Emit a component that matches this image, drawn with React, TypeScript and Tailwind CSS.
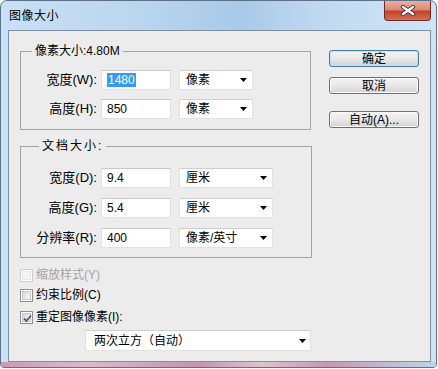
import React from "react";

const font = "font-['Liberation_Sans','Noto_Sans_CJK_SC',sans-serif]";

function Arrow() {
  return (
    <svg width="7" height="4" viewBox="0 0 7 4" className="shrink-0">
      <path d="M0 0 H7 L3.5 4 Z" fill="#000" />
    </svg>
  );
}

function Field({ children }: { children: React.ReactNode }) {
  return (
    <div className="w-[70px] h-[20px] bg-white border border-[#e2e2e2] border-t-[#c8c8c8] pl-[5px] flex items-center leading-[14px]">
      {children}
    </div>
  );
}

function Select({ label, width }: { label: string; width: string }) {
  return (
    <div
      className={`${width} h-[20px] ml-[8px] bg-white border border-[#e2e2e2] border-t-[#cfcfcf] pl-[6px] pr-[5px] flex items-center justify-between leading-[14px]`}
    >
      <span>{label}</span>
      <Arrow />
    </div>
  );
}

function Row({
  label,
  value,
  unit,
  width,
  selected,
}: {
  label: string;
  value: string;
  unit: string;
  width: string;
  selected?: boolean;
}) {
  return (
    <div className="flex items-center h-[20px]">
      <span className="w-[80px] pr-[4px] text-right text-[13px] leading-[14px]">{label}</span>
      <Field>
        {selected ? <span className="bg-[#3399ff] text-white px-[1px]">{value}</span> : <span>{value}</span>}
      </Field>
      <Select label={unit} width={width} />
    </div>
  );
}

function Checkbox({ checked, disabled }: { checked?: boolean; disabled?: boolean }) {
  return (
    <div
      className={`w-[13px] h-[13px] border ${disabled ? "border-[#cdcdcd]" : "border-[#8e8f8f]"} bg-white p-[1px] shrink-0`}
    >
      <div
        className={`w-full h-full border ${
          disabled ? "border-[#e6e6e6] bg-[#f4f4f4]" : "border-[#c6c6c6] bg-gradient-to-br from-[#d6d6d6] to-[#fafafa]"
        } relative`}
      >
        {checked && (
          <svg width="11" height="11" viewBox="0 0 11 11" className="absolute -left-[1px] -top-[1px]">
            <path d="M2 5.5 L4.5 8 L9 2.5" stroke="#4a5b80" strokeWidth="1.8" fill="none" />
          </svg>
        )}
      </div>
    </div>
  );
}

function Button({ label, primary }: { label: string; primary?: boolean }) {
  return (
    <div
      className={`w-[90px] h-[17px] rounded-[3px] border flex items-center justify-center leading-[14px] bg-gradient-to-b from-[#f4f4f4] via-[#e8e8e8] to-[#d2d2d2] ${
        primary ? "border-[#3c7fb1] shadow-[inset_0_0_0_1px_#bfe4f8]" : "border-[#707070] shadow-[inset_0_0_0_1px_#fbfbfb]"
      }`}
    >
      {label}
    </div>
  );
}

export default function App() {
  return (
    <div className={`w-[438px] h-[369px] bg-white text-[12px] text-black ${font}`}>
      <div className="relative w-[437px] h-[368px] rounded-t-[7px] rounded-b-[4px] border border-[#5c7186] bg-[linear-gradient(90deg,#c9e0f6_0%,#bcd6ef_30%,#a9c9e9_55%,#c2daf1_75%,#cfe3f6_100%)] flex flex-col overflow-hidden">
        {/* title bar */}
        <div className="h-[29px] pl-[8px] flex items-center text-[12px] tracking-[0.5px] leading-[14px]">图像大小</div>

        <div className="absolute right-[5px] top-0 w-[47px] h-[20px] rounded-b-[4px] border border-t-0 border-[#6f2b22] bg-[linear-gradient(180deg,#eab0a2_0%,#dc8a76_45%,#c4422b_55%,#d2705a_100%)] flex items-center justify-center">
          <svg width="16" height="11" viewBox="0 0 16 11">
            <path d="M3 2 L13 9 M13 2 L3 9" stroke="#4a3b3b" strokeWidth="4.2" strokeLinecap="round" />
            <path d="M3 2 L13 9 M13 2 L3 9" stroke="#ffffff" strokeWidth="2.2" strokeLinecap="round" />
          </svg>
        </div>

        {/* client area */}
        <div className="ml-[7px] w-[423px] h-[332px] border border-[#7d91a6] bg-[#ececec] flex">
          <div className="pl-[11px] flex flex-col">
            <fieldset className="mt-[13px] w-[291px] border border-[#a3a3a3] pt-[12px] pb-[10px] flex flex-col gap-[9px]">
              <legend className="ml-[11px] px-[3px] leading-[14px]">像素大小:4.80M</legend>
              <Row label="宽度(W):" value="1480" unit="像素" width="w-[74px]" selected />
              <Row label="高度(H):" value="850" unit="像素" width="w-[74px]" />
            </fieldset>

            <fieldset className="mt-[9px] w-[292px] border border-[#a3a3a3] pt-[15px] pb-[9px] flex flex-col gap-[10px]">
              <legend className="ml-[18px] px-[3px] leading-[14px] tracking-[2px]">文档大小:</legend>
              <Row label="宽度(D):" value="9.4" unit="厘米" width="w-[94px]" />
              <Row label="高度(G):" value="5.4" unit="厘米" width="w-[94px]" />
              <Row label="分辨率(R):" value="400" unit="像素/英寸" width="w-[94px]" />
            </fieldset>

            <div className="mt-[10px] flex items-center h-[14px] text-[#a3a3a3]">
              <Checkbox disabled />
              <span className="ml-[3px] leading-[14px]">缩放样式(Y)</span>
            </div>
            <div className="mt-[6px] flex items-center h-[14px]">
              <Checkbox />
              <span className="ml-[3px] leading-[14px]">约束比例(C)</span>
            </div>
            <div className="mt-[8px] flex items-center h-[14px]">
              <Checkbox checked />
              <span className="ml-[3px] leading-[14px]">重定图像像素(I):</span>
            </div>

            <div className="mt-[6px] ml-[65px] w-[226px] h-[21px] bg-white border border-[#e2e2e2] border-t-[#cfcfcf] pl-[8px] pr-[4px] flex items-center justify-between leading-[14px]">
              <span>两次立方（自动）</span>
              <Arrow />
            </div>
          </div>

          <div className="ml-[17px] flex flex-col">
            <div className="mt-[19px]">
              <Button label="确定" primary />
            </div>
            <div className="mt-[10px]">
              <Button label="取消" />
            </div>
            <div className="mt-[17px]">
              <Button label="自动(A)..." />
            </div>
          </div>
        </div>

        {/* bottom glass frame tint */}
        <div className="flex-1 bg-[linear-gradient(90deg,#c99bb3_0%,#d9bccb_20%,#c394ad_45%,#dcc4d1_60%,#c698b0_75%,#bcd5ec_100%)]" />
      </div>
    </div>
  );
}
